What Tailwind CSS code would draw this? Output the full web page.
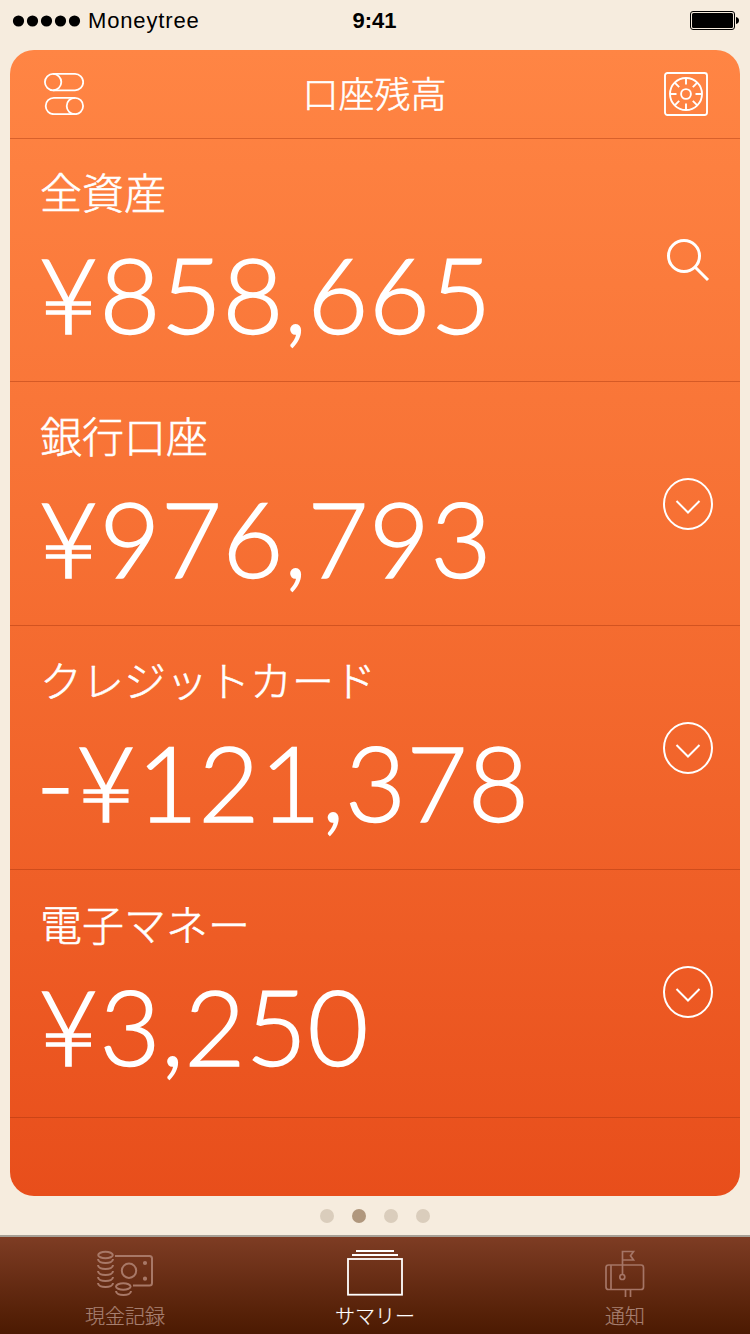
<!DOCTYPE html>
<html lang="ja">
<head>
    <meta charset="UTF-8">
    <meta name="viewport" content="width=device-width, initial-scale=1.0">
    <title>Moneytree</title>
    <script src="https://cdn.jsdelivr.net/npm/@tailwindcss/browser@4"></script>
</head>
<body class="bg-[#f6ecde] w-[750px] h-[1334px] overflow-hidden flex flex-col font-['Noto_Sans_CJK_JP',sans-serif]">
    <!-- status bar -->
    <div class="h-[50px] shrink-0 grid grid-cols-3 items-start pt-[7px] pl-3 pr-[11px] text-black font-['Liberation_Sans',sans-serif] text-[22px] leading-7">
        <div class="flex items-center">
            <svg class="w-[70px] h-3 mr-1.5" viewBox="0 0 70 12">
                <circle cx="6.5" cy="6" r="5.6"/><circle cx="20.5" cy="6" r="5.6"/><circle cx="34.5" cy="6" r="5.6"/><circle cx="48.5" cy="6" r="5.6"/><circle cx="62.5" cy="6" r="5.6"/>
            </svg>
            <span class="tracking-[0.85px]">Moneytree</span>
        </div>
        <p class="text-center font-bold -ml-0.5">9:41</p>
        <svg class="w-[49px] h-[19px] justify-self-end mt-1" viewBox="0 0 49 19">
            <rect x="0.5" y="0.5" width="44" height="18" rx="2.5" fill="none" stroke="#000"/>
            <rect x="2" y="2" width="41" height="15" rx="1.5"/>
            <path d="M46 6c2 .4 3 1.8 3 3.5s-1 3.1-3 3.5z"/>
        </svg>
    </div>

    <!-- card -->
    <div class="mx-[10px] h-[1146px] shrink-0 rounded-[24px] text-white bg-linear-to-b from-[#ff8544] via-[#f56c30] to-[#e84e1b] flex flex-col">
        <div class="h-[89px] border-b border-[#a0300a]/40 flex items-center justify-between pl-[34px] pr-8">
            <svg class="w-[40px] h-[42px]" viewBox="0 0 40 42" fill="none" stroke="#fff" stroke-width="1.8">
                <path d="M9 .9h22a8.200 8.200 0 0 1 0 16.400H9"/>
                <circle cx="9.100" cy="9.100" r="8.200"/>
                <path d="M31 24.800H9.900a8.200 8.200 0 0 0 0 16.400H31"/>
                <circle cx="30.900" cy="33" r="8.200"/>
            </svg>
            <h1 class="text-[36px] leading-[52px] font-light [-webkit-text-stroke:0.5px_white] -mt-1 pl-px">口座残高</h1>
            <svg class="w-[44px] h-[44px]" viewBox="0 0 44 44" fill="none" stroke="#fff" stroke-width="1.900">
                <rect x="1" y="1" width="42" height="42" rx="2.500"/>
                <circle cx="22" cy="22" r="16"/>
                <circle cx="22" cy="22" r="4.900"/>
                <path d="M22 6v6.500M22 31.500v6.500M6 22h6.500M31.500 22h6.500M10.700 10.700l4.500 4.500M28.800 28.800l4.500 4.500M33.300 10.700l-4.500 4.500M15.200 28.800l-4.500 4.500"/>
            </svg>
        </div>

        <div class="h-[243px] border-b border-[#a0300a]/40 flex justify-between pl-[30px] pr-[27px]">
            <div class="pt-6">
                <h2 class="text-[42px] leading-[56px] font-light [-webkit-text-stroke:0.6px_white]">全資産</h2>
                <p class="text-[105px] leading-[126px] mt-[11px] -ml-0.5 tracking-[0.6px] font-['Lato',sans-serif] font-light [-webkit-text-stroke:1.6px_white] whitespace-nowrap">¥858,665</p>
            </div>
            <svg class="w-[50px] h-[52px] mt-[95px]" viewBox="0 0 50 52" fill="none" stroke="#fff" stroke-width="3">
                <circle cx="21" cy="22" r="15.500"/>
                <path d="M31.500 32.500L45 46"/>
            </svg>
        </div>

        <div class="h-[244px] border-b border-[#a0300a]/40 flex justify-between pl-[30px] pr-[27px]">
            <div class="pt-[25px]">
                <h2 class="text-[42px] leading-[56px] font-light [-webkit-text-stroke:0.6px_white]">銀行口座</h2>
                <p class="text-[105px] leading-[126px] mt-[11px] -ml-0.5 tracking-[0.6px] font-['Lato',sans-serif] font-light [-webkit-text-stroke:1.6px_white] whitespace-nowrap">¥976,793</p>
            </div>
            <svg class="w-[50px] h-[52px] mt-[96px]" viewBox="0 0 50 52" fill="none" stroke="#fff" stroke-width="2">
                <ellipse cx="25" cy="26" rx="24" ry="25"/>
                <path d="M13.500 23L25 34.500 36.500 23"/>
            </svg>
        </div>

        <div class="h-[244px] border-b border-[#a0300a]/40 flex justify-between pl-[30px] pr-[27px]">
            <div class="pt-[25px]">
                <h2 class="text-[42px] leading-[56px] font-light [-webkit-text-stroke:0.6px_white]">クレジットカード</h2>
                <p class="text-[105px] leading-[126px] mt-[11px] -ml-1 tracking-[0.6px] font-['Lato',sans-serif] font-light [-webkit-text-stroke:1.6px_white] whitespace-nowrap">-¥121,378</p>
            </div>
            <svg class="w-[50px] h-[52px] mt-[96px]" viewBox="0 0 50 52" fill="none" stroke="#fff" stroke-width="2">
                <ellipse cx="25" cy="26" rx="24" ry="25"/>
                <path d="M13.500 23L25 34.500 36.500 23"/>
            </svg>
        </div>

        <div class="h-[248px] border-b border-[#a0300a]/40 flex justify-between pl-[30px] pr-[27px]">
            <div class="pt-[25px]">
                <h2 class="text-[42px] leading-[56px] font-light [-webkit-text-stroke:0.6px_white]">電子マネー</h2>
                <p class="text-[105px] leading-[126px] mt-[11px] -ml-0.5 tracking-[0.6px] font-['Lato',sans-serif] font-light [-webkit-text-stroke:1.6px_white] whitespace-nowrap">¥3,250</p>
            </div>
            <svg class="w-[50px] h-[52px] mt-[96px]" viewBox="0 0 50 52" fill="none" stroke="#fff" stroke-width="2">
                <ellipse cx="25" cy="26" rx="24" ry="25"/>
                <path d="M13.500 23L25 34.500 36.500 23"/>
            </svg>
        </div>
    </div>

    <!-- page dots -->
    <div class="h-[39px] shrink-0 flex justify-center gap-[18px] pt-[13px]">
        <span class="size-3.5 rounded-full bg-[#dacdbc]"></span>
        <span class="size-3.5 rounded-full bg-[#b0977d]"></span>
        <span class="size-3.5 rounded-full bg-[#dacdbc]"></span>
        <span class="size-3.5 rounded-full bg-[#dacdbc]"></span>
    </div>

    <!-- tab bar -->
    <div class="h-[99px] shrink-0 border-t-2 border-[#a6a096] bg-linear-to-b from-[#7f3d24] to-[#4c1a02] bg-origin-border grid grid-cols-3 text-[20px] leading-[28px] font-light text-[#a67f70] [-webkit-text-stroke:0.2px_currentColor]">
        <div class="flex flex-col items-center pt-3">
            <svg class="w-[58px] h-[50px]" viewBox="0 0 58 50" fill="none" stroke="#a87867" stroke-width="2">
                <ellipse cx="9.500" cy="6" rx="7.300" ry="3.200"/>
                <path d="M2 10c0 5.300 15 5.300 15 0M2 16c0 5.300 15 5.300 15 0M2 22c0 5.300 15 5.300 15 0M2 28c0 5.300 15 5.300 15 0M2 34c0 5.300 15 5.300 15 0"/>
                <path d="M19 7h34.500a2.500 2.500 0 0 1 2.500 2.500v24.500a2.500 2.500 0 0 1-2.500 2.500H37"/>
                <circle cx="33" cy="21.700" r="7.200"/>
                <circle cx="49" cy="14" r="1.100"/><circle cx="49" cy="29.700" r="1.100"/>
                <ellipse cx="27.300" cy="37.500" rx="7.300" ry="3.200"/>
                <path d="M20 42c0 5.300 15 5.300 15 0"/>
            </svg>
            <p class="mt-[3px]">現金記録</p>
        </div>
        <div class="flex flex-col items-center pt-3 text-white">
            <svg class="w-[58px] h-[50px]" viewBox="0 0 58 50" fill="none" stroke="#fff" stroke-width="1.800">
                <path d="M10 2h38M6 6h46"/>
                <rect x="2" y="10" width="54" height="35.700"/>
            </svg>
            <p class="mt-[3px]">サマリー</p>
        </div>
        <div class="flex flex-col items-center pt-3">
            <svg class="w-[58px] h-[50px]" viewBox="0 0 58 50" fill="none" stroke="#a57566" stroke-width="1.700">
                <rect x="10" y="16" width="37.500" height="24.500" rx="2.500"/>
                <path d="M15 16v24.500M26.500 25.500V2.500H37.500l-3 4.300 3 4.200H26.500M29.500 40.500v7.500M34.500 40.500v7.500"/>
                <circle cx="26.300" cy="28" r="2.500"/>
            </svg>
            <p class="mt-[3px]">通知</p>
        </div>
    </div>
</body>
</html>
